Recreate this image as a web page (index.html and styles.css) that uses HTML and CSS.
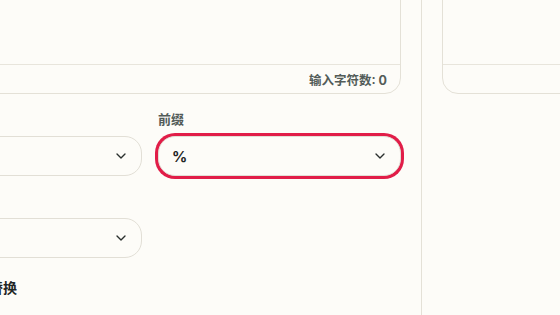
FILE: index.html
```html
<!DOCTYPE html>
<html lang="zh-CN">
<head>
<meta charset="utf-8">
<title>文本前后缀</title>
<link rel="stylesheet" href="styles.css">
</head>
<body>
<div class="app">
  <div class="left">
    <div class="card">
      <div class="card-body"></div>
      <div class="card-foot">输入字符数: 0</div>
    </div>
    <div class="fields">
      <div class="field">
        <div class="label">&nbsp;</div>
        <div class="select"><span class="value"></span>
          <svg class="chev" width="16" height="16" viewBox="0 0 24 24" fill="none" stroke="currentColor" stroke-width="2" stroke-linecap="round" stroke-linejoin="round"><path d="m6 9 6 6 6-6"/></svg>
        </div>
      </div>
      <div class="field">
        <div class="label">前缀</div>
        <div class="select focus"><span class="value">%</span>
          <svg class="chev" width="16" height="16" viewBox="0 0 24 24" fill="none" stroke="currentColor" stroke-width="2" stroke-linecap="round" stroke-linejoin="round"><path d="m6 9 6 6 6-6"/></svg>
        </div>
      </div>
      <div class="field">
        <div class="label">&nbsp;</div>
        <div class="select"><span class="value"></span>
          <svg class="chev" width="16" height="16" viewBox="0 0 24 24" fill="none" stroke="currentColor" stroke-width="2" stroke-linecap="round" stroke-linejoin="round"><path d="m6 9 6 6 6-6"/></svg>
        </div>
      </div>
    </div>
    <div class="section">
      <svg class="sec-icon" width="16" height="16" viewBox="0 0 24 24" fill="none" stroke="currentColor" stroke-width="2"><path d="M4 7h16M4 12h10M4 17h6"/></svg>
      <span>字符查找与替换</span>
    </div>
  </div>
  <div class="right">
    <div class="card wide">
      <div class="card-body"></div>
      <div class="card-foot"></div>
    </div>
  </div>
</div>
</body>
</html>
```

FILE: styles.css
```css
* { box-sizing: border-box; }
html, body {
  margin: 0;
  padding: 0;
  background: #fdfcf8;
  width: 560px;
  height: 315px;
  overflow: hidden;
}
body {
  font-family: "Inter", "Noto Sans CJK SC", sans-serif;
  color: #1f2624;
}
.app {
  display: flex;
  height: 315px;
}
.left {
  flex: 0 0 522px;
  margin-left: -101px;
  padding-right: 20px;
}
.card {
  margin-top: -100px;
  border: 1px solid #e4e1d7;
  border-radius: 16px;
  background: #fdfcf8;
}
.card-body {
  height: 163px;
}
.card-foot {
  height: 29px;
  border-top: 1px solid #e8e5dc;
  display: flex;
  align-items: center;
  justify-content: flex-end;
  padding-right: 13px;
  font-size: 12.5px;
  font-weight: 700;
  color: #535c59;
}
.fields {
  margin-top: 16px;
  display: grid;
  grid-template-columns: 243px 243px;
  column-gap: 16px;
  row-gap: 16px;
}
.label {
  font-size: 13px;
  line-height: 18px;
  font-weight: 600;
  color: #525b58;
  margin-bottom: 8px;
}
.select {
  height: 40px;
  border: 1px solid #e2dfd6;
  border-radius: 17px;
  background: #fdfcf8;
  display: flex;
  align-items: center;
  justify-content: space-between;
  padding: 0 12px 0 13px;
  color: #1f2624;
}
.select.focus {
  box-shadow: 0 0 0 3px #e11d48;
}
.value {
  font-size: 15px;
  font-weight: 700;
}
.chev {
  color: #2a302e;
}
.section {
  margin-top: 20px;
  display: flex;
  align-items: center;
  gap: 4px;
  font-size: 14px;
  line-height: 20px;
  font-weight: 700;
  color: #1f2624;
}
.sec-icon { flex: 0 0 16px; }
.right {
  flex: 1 0 auto;
  border-left: 1px solid #e4e1d7;
  padding-left: 20px;
}
.card.wide {
  width: 300px;
}
```
